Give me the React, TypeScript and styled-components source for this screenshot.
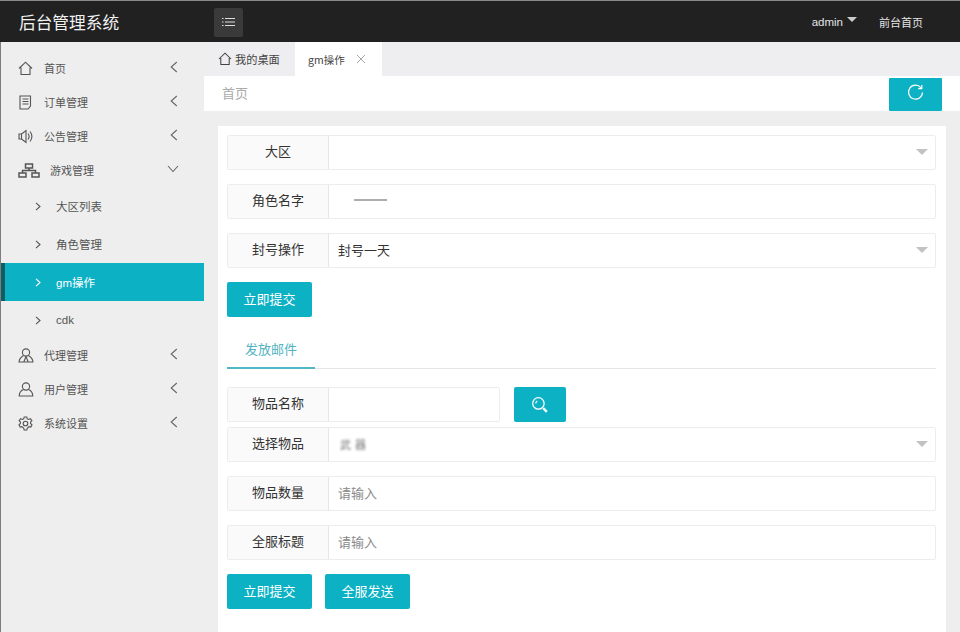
import React from 'react';
import styled, { createGlobalStyle } from 'styled-components';

const Global = createGlobalStyle`
  html, body { margin: 0; padding: 0; height: 632px; overflow: hidden; background: #eeeeee; }
  body { font-family: "Noto Sans CJK SC", "Liberation Sans", sans-serif; }
  * { box-sizing: border-box; }
  #root { height: 632px; }
`;

const teal = '#0db1c4';

const Page = styled.div`
  width: 960px; height: 632px; display: flex; flex-direction: column; overflow: hidden;
`;
const Header = styled.header`
  height: 42px; flex: none; background: #212121; border-top: 1px solid #8a8a8a;
  display: flex; align-items: center; color: #eee;
`;
const Logo = styled.div`
  width: 214px; padding-left: 19px; font-size: 16.7px; line-height: 40px; color: #f1f1f1; letter-spacing: 0;
`;
const Toggle = styled.div`
  width: 29px; height: 29px; margin-top: 1px; background: #3a3a3a; border-radius: 2px;
  display: flex; align-items: center; justify-content: center;
`;
const HeaderRight = styled.div`
  margin-left: auto; display: flex; align-items: center; padding-right: 37px;
  font-size: 11px; color: #e4e4e4;
`;
const AdminName = styled.span`
  font-family: "Liberation Sans", sans-serif; font-size: 11.5px;
`;
const Caret = styled.span`
  width: 0; height: 0; margin: -4px 22px 0 4px;
  border-left: 5px solid transparent; border-right: 5px solid transparent; border-top: 5px solid #ccc;
`;
const Body = styled.div`
  flex: 1; display: flex; min-height: 0;
`;
const Sidebar = styled.aside`
  width: 204px; flex: none; background: #eeeeee; border-left: 1px solid #7d7d7d; padding-top: 9px;
`;
const MainItem = styled.div`
  height: 34px; display: flex; align-items: center; padding-left: 17px; color: #555; font-size: 11px;
`;
const MainIcon = styled.span<{ $wide?: boolean }>`
  width: ${(p) => (p.$wide ? 32 : 26)}px; flex: none; display: flex; align-items: center; color: #555;
`;
const MainLabel = styled.span`
  flex: 1;
`;
const Chevron = styled.span<{ $open?: boolean }>`
  width: ${(p) => (p.$open ? 37 : 34)}px; flex: none; display: flex; color: #666; margin-top: -2px;
`;
const SubList = styled.div`
  margin-bottom: -1px;
`;
const SubItem = styled.div<{ $active?: boolean }>`
  height: 38px; display: flex; align-items: center; padding-left: ${(p) => (p.$active ? 30 : 34)}px;
  font-size: 11px; gap: 15px;
  color: ${(p) => (p.$active ? '#fff' : '#555')};
  background: ${(p) => (p.$active ? teal : 'transparent')};
  border-left: ${(p) => (p.$active ? '4px solid #0c5e66' : '0')};
`;
const SubLatin = styled.span`
  font-family: "Liberation Sans", "Noto Sans CJK SC", sans-serif; font-size: 11.5px;
`;
const Main = styled.main`
  flex: 1; min-width: 0; display: flex; flex-direction: column;
`;
const TabBar = styled.div`
  height: 34px; flex: none; display: flex; background: #eeeef0;
`;
const Tab = styled.div<{ $active?: boolean }>`
  height: 34px; display: flex; align-items: center; color: #444;
  font-size: ${(p) => (p.$active ? 10.5 : 11.2)}px;
  background: ${(p) => (p.$active ? '#fff' : 'transparent')};
  width: ${(p) => (p.$active ? 87 : 91)}px;
  padding-left: ${(p) => (p.$active ? 13 : 14)}px;
  gap: ${(p) => (p.$active ? 11 : 3)}px;
`;
const TabClose = styled.span`
  display: flex; color: #a6a6a6;
`;
const Crumb = styled.div`
  height: 35px; flex: none; background: #fff; display: flex; padding-left: 18px; padding-right: 18px;
  align-items: flex-start; justify-content: space-between;
`;
const CrumbText = styled.span`
  font-size: 13px; color: #aaa; line-height: 33px;
`;
const RefreshButton = styled.div`
  width: 53px; height: 33px; margin-top: 2px; background: ${teal}; border-radius: 1px;
  display: flex; justify-content: center; padding-top: 6px;
`;
const Content = styled.div`
  flex: 1; padding: 15px 14px 0;
`;
const Card = styled.section`
  background: #fff; height: 100%; padding: 9px 10px 0 9px;
`;
const Row = styled.div<{ $gap?: number }>`
  height: 35px; display: flex; border: 1px solid #ededed; border-radius: 2px;
  margin-bottom: ${(p) => p.$gap ?? 14}px; background: #fff;
`;
const Label = styled.div`
  width: 101px; flex: none; background: #fafafa; border-right: 1px solid #e6e6e6;
  display: flex; align-items: center; justify-content: center; font-size: 13px; color: #333; padding-bottom: 4px;
`;
const Value = styled.div`
  flex: 1; display: flex; align-items: center; padding: 0 7px 2px 9px; font-size: 13px; color: #333;
`;
const Placeholder = styled.span`
  color: #8a8a8a;
`;
const Arrow = styled.span`
  margin-left: auto; width: 0; height: 0;
  border-left: 6px solid transparent; border-right: 6px solid transparent; border-top: 6px solid #c2c2c2;
`;
const Smudge = styled.span`
  width: 33px; height: 8px; margin-left: 16px; margin-bottom: 1px;
  background: linear-gradient(to bottom, transparent 40%, #999 40%, #999 60%, transparent 60%);
  filter: blur(0.6px); opacity: .8;
`;
const SmudgeText = styled.span`
  font-size: 11px; letter-spacing: 4px; color: #777; filter: blur(1px); margin-left: 2px;
`;
const SearchRow = styled.div`
  display: flex; gap: 14px; margin-bottom: 5px;
`;
const ShortRow = styled(Row)`
  width: 273px; margin-bottom: 0;
`;
const Button = styled.div`
  width: 85px; height: 35px; background: ${teal}; color: #fff; border-radius: 2px;
  display: flex; align-items: center; justify-content: center; font-size: 13px; padding-bottom: 3px;
`;
const SearchButton = styled(Button)`
  width: 52px; padding-bottom: 0;
`;
const Buttons = styled.div`
  display: flex; gap: 13px;
`;
const SectionTabs = styled.div`
  height: 37px; margin: 15px 0 18px; border-bottom: 1px solid #e6e6e6; display: flex;
`;
const SectionTab = styled.div`
  width: 88px; height: 37px; border-bottom: 2px solid #4fb8c6; color: #4fb3c2;
  font-size: 13px; text-align: center; line-height: 33px;
`;

const S = { fill: 'none', stroke: 'currentColor', strokeWidth: 1.1 } as const;

const HomeIcon = ({ size = 15 }: { size?: number }) => (
  <svg width={size} height={size} viewBox="0 0 15 15" {...S}>
    <path d="M1 7.5 7.5 1.2 14 7.5M3 6.4V13.5H12V6.4" />
  </svg>
);
const OrderIcon = () => (
  <svg width="15" height="15" viewBox="0 0 15 15" {...S}>
    <path d="M2 1H12.5V11L10 14H2ZM4.5 4H10.5M4.5 6.5H10.5M4.5 9H10.5" />
  </svg>
);
const SpeakerIcon = () => (
  <svg width="16" height="15" viewBox="0 0 16 15" {...S}>
    <path d="M1 5H3.5V10H1ZM3.5 5 8 1.5V13.5L3.5 10M10 4.5C11.3 6.2 11.3 8.8 10 10.5M12 2.5C14.3 5.5 14.3 9.5 12 12.5" />
  </svg>
);
const NetworkIcon = () => (
  <svg width="22" height="15" viewBox="0 0 22 15" fill="none" stroke="currentColor" strokeWidth="1.5">
    <path d="M7.5 1H14.5V5H7.5ZM1 10H8V14H1ZM14 10H21V14H14ZM4.5 10V7.5H17.5V10M11 5V7.5" />
  </svg>
);
const AgentIcon = () => (
  <svg width="16" height="15" viewBox="0 0 16 15" {...S}>
    <circle cx="8" cy="4.5" r="3.6" />
    <path d="M5.5 7.5C3 9 1.3 11 1 14H15C14.7 11 13 9 10.5 7.5M8 8.5 5.8 14M8 8.5 10.2 14" />
  </svg>
);
const UserIcon = () => (
  <svg width="16" height="15" viewBox="0 0 16 15" {...S}>
    <circle cx="8" cy="4.5" r="3.6" />
    <path d="M5.5 7.5C3 8.5 1.3 10.5 1.2 14H14.8C14.7 10.5 13 8.5 10.5 7.5" />
  </svg>
);
const GearIcon = () => (
  <svg width="15" height="15" viewBox="0 0 15 15" {...S}>
    <circle cx="7.5" cy="7.5" r="2.3" />
    <path d="M6.2 1H8.8L9.2 2.8 10.8 3.5 12.4 2.6 13.9 4.6 12.6 5.9V7.5L14 8.8 12.8 11 11 10.6 9.4 12 8.8 14H6.2L5.6 12 4 10.6 2.2 11 1 8.8 2.4 7.5V5.9L1.1 4.6 2.6 2.6 4.2 3.5 5.8 2.8Z" />
  </svg>
);
const ChevLeft = () => (
  <svg width="8" height="12" viewBox="0 0 8 12" {...S}><path d="M6.8 1 1.2 6 6.8 11" /></svg>
);
const ChevDown = () => (
  <svg width="12" height="8" viewBox="0 0 12 8" {...S}><path d="M1 1 6 6.5 11 1" /></svg>
);
const ChevRight = () => (
  <svg width="6" height="9" viewBox="0 0 6 9" fill="none" stroke="currentColor" strokeWidth="1.1"><path d="M1 .8 5 4.5 1 8.2" /></svg>
);
const MenuIcon = () => (
  <svg width="13" height="10" viewBox="0 0 13 10" fill="none" stroke="#ddd" strokeWidth="1">
    <path d="M0 1.5H1.5M3 1.5H13M0 5H1.5M3 5H13M0 8.5H1.5M3 8.5H13" />
  </svg>
);
const CloseIcon = () => (
  <svg width="10" height="10" viewBox="0 0 10 10" fill="none" stroke="currentColor" strokeWidth="1"><path d="M1 1 9 9M9 1 1 9" /></svg>
);
const RefreshIcon = () => (
  <svg width="17" height="17" viewBox="0 0 17 17" fill="none" stroke="#fff" strokeWidth="1.2">
    <path d="M14 3.8A7 7 0 1 0 15.5 8.5" />
    <path d="M14.8 1V4.6H11.2" />
  </svg>
);
const SearchIcon = () => (
  <svg width="18" height="18" viewBox="0 0 17 17" fill="none" stroke="#fff" strokeWidth="1.2">
    <circle cx="7" cy="7" r="5.4" />
    <path d="M4.5 7A2.5 2.5 0 0 1 6 4.7" />
    <path d="M11.5 11.5 15 15" strokeWidth="2.2" />
  </svg>
);

type Menu = { label: string; icon: React.ReactNode; wide?: boolean; open?: boolean };
const topMenus: Menu[] = [
  { label: '首页', icon: <HomeIcon /> },
  { label: '订单管理', icon: <OrderIcon /> },
  { label: '公告管理', icon: <SpeakerIcon /> },
  { label: '游戏管理', icon: <NetworkIcon />, wide: true, open: true },
];
const bottomMenus: Menu[] = [
  { label: '代理管理', icon: <AgentIcon /> },
  { label: '用户管理', icon: <UserIcon /> },
  { label: '系统设置', icon: <GearIcon /> },
];
const subMenus = ['大区列表', '角色管理', 'gm操作', 'cdk'];

const MenuRow = ({ m }: { m: Menu }) => (
  <MainItem>
    <MainIcon $wide={m.wide}>{m.icon}</MainIcon>
    <MainLabel>{m.label}</MainLabel>
    <Chevron $open={m.open}>{m.open ? <ChevDown /> : <ChevLeft />}</Chevron>
  </MainItem>
);

export default function App() {
  return (
    <Page>
      <Global />
      <Header>
        <Logo>后台管理系统</Logo>
        <Toggle><MenuIcon /></Toggle>
        <HeaderRight>
          <AdminName>admin</AdminName>
          <Caret />
          <span>前台首页</span>
        </HeaderRight>
      </Header>
      <Body>
        <Sidebar>
          {topMenus.map((m) => <MenuRow key={m.label} m={m} />)}
          <SubList>
            {subMenus.map((s) => (
              <SubItem key={s} $active={s === 'gm操作'}>
                <ChevRight />
                <SubLatin>{s}</SubLatin>
              </SubItem>
            ))}
          </SubList>
          {bottomMenus.map((m) => <MenuRow key={m.label} m={m} />)}
        </Sidebar>
        <Main>
          <TabBar>
            <Tab><HomeIcon size={14} />我的桌面</Tab>
            <Tab $active>gm操作<TabClose><CloseIcon /></TabClose></Tab>
          </TabBar>
          <Crumb>
            <CrumbText>首页</CrumbText>
            <RefreshButton><RefreshIcon /></RefreshButton>
          </Crumb>
          <Content>
            <Card>
              <Row>
                <Label>大区</Label>
                <Value><Arrow /></Value>
              </Row>
              <Row>
                <Label>角色名字</Label>
                <Value><Smudge /></Value>
              </Row>
              <Row>
                <Label>封号操作</Label>
                <Value>封号一天<Arrow /></Value>
              </Row>
              <Button>立即提交</Button>
              <SectionTabs><SectionTab>发放邮件</SectionTab></SectionTabs>
              <SearchRow>
                <ShortRow>
                  <Label>物品名称</Label>
                  <Value />
                </ShortRow>
                <SearchButton><SearchIcon /></SearchButton>
              </SearchRow>
              <Row>
                <Label>选择物品</Label>
                <Value><SmudgeText>武器</SmudgeText><Arrow /></Value>
              </Row>
              <Row>
                <Label>物品数量</Label>
                <Value><Placeholder>请输入</Placeholder></Value>
              </Row>
              <Row>
                <Label>全服标题</Label>
                <Value><Placeholder>请输入</Placeholder></Value>
              </Row>
              <Buttons>
                <Button>立即提交</Button>
                <Button>全服发送</Button>
              </Buttons>
            </Card>
          </Content>
        </Main>
      </Body>
    </Page>
  );
}
